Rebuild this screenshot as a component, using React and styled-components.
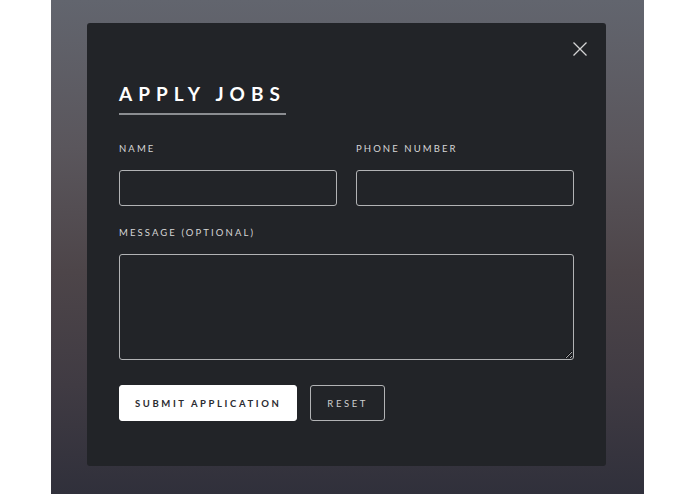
import styled, { createGlobalStyle } from "styled-components";

const GlobalStyle = createGlobalStyle`
  html, body {
    margin: 0;
    padding: 0;
    background: #fff;
  }
  body {
    font-family: Lato, "Liberation Sans", sans-serif;
  }
  * {
    box-sizing: border-box;
  }
`;

const Page = styled.div`
  width: 593px;
  height: 494px;
  margin: 0 0 0 51px;
  padding: 23px 0 0 36px;
  display: flex;
  align-items: flex-start;
  background: linear-gradient(
    180deg,
    #62656e 0%,
    #5a565c 30%,
    #4d4549 55%,
    #403b43 78%,
    #30303b 100%
  );
`;

const Modal = styled.div`
  position: relative;
  width: 519px;
  height: 443px;
  padding: 59px 32px 45px;
  background: #222428;
  border-radius: 3px;
  color: #fff;
`;

const CloseButton = styled.button`
  position: absolute;
  top: 19px;
  right: 19px;
  width: 14px;
  height: 14px;
  padding: 0;
  border: 0;
  background: none;
  cursor: pointer;
  display: block;
`;

const Title = styled.h2`
  display: inline-block;
  margin: 0;
  padding-bottom: 7px;
  font-size: 19px;
  line-height: 24px;
  font-weight: 700;
  letter-spacing: 6px;
  color: #fff;
  border-bottom: 2px solid #8b8d91;
`;

const Form = styled.form`
  display: flex;
  flex-direction: column;
  gap: 21px;
  margin-top: 28px;
`;

const Row = styled.div`
  display: grid;
  grid-template-columns: 1fr 1fr;
  gap: 19px;
`;

const Field = styled.label`
  display: flex;
  flex-direction: column;
`;

const Label = styled.span`
  display: block;
  font-size: 9.5px;
  line-height: 12px;
  letter-spacing: 2.1px;
  color: #d6d6d6;
  margin-bottom: 15px;
`;

const Input = styled.input`
  height: 36px;
  width: 100%;
  background: transparent;
  border: 1px solid #b2b3b5;
  border-radius: 3px;
  color: #fff;
  padding: 0 10px;
  font: inherit;
  outline: none;
`;

const TextArea = styled.textarea`
  height: 106px;
  width: 100%;
  background: transparent;
  border: 1px solid #b2b3b5;
  border-radius: 3px;
  color: #fff;
  padding: 10px;
  font: inherit;
  outline: none;
  resize: vertical;
  display: block;
`;

const Actions = styled.div`
  display: flex;
  gap: 13px;
  margin-top: 4px;
`;

const Button = styled.button`
  height: 36px;
  padding: 0 ${(p) => (p.$primary ? "15px" : "16px")};
  border-radius: 3px;
  font-family: Lato, "Liberation Sans", sans-serif;
  font-size: 9.5px;
  letter-spacing: 2.6px;
  font-weight: ${(p) => (p.$primary ? 700 : 400)};
  background: ${(p) => (p.$primary ? "#fff" : "transparent")};
  color: ${(p) => (p.$primary ? "#2a2b30" : "#cfcfcf")};
  border: 1px solid ${(p) => (p.$primary ? "#fff" : "#b2b3b5")};
  cursor: pointer;
`;

function CloseIcon() {
  return (
    <svg width="14" height="14" viewBox="0 0 14 14" fill="none">
      <path d="M0.5 0.5L13.5 13.5M13.5 0.5L0.5 13.5" stroke="#d4d4d4" strokeWidth="1.3" />
    </svg>
  );
}

export default function App() {
  return (
    <>
      <GlobalStyle />
      <Page>
        <Modal>
          <CloseButton aria-label="Close">
            <CloseIcon />
          </CloseButton>
          <Title>APPLY JOBS</Title>
          <Form onSubmit={(e) => e.preventDefault()}>
            <Row>
              <Field>
                <Label>NAME</Label>
                <Input type="text" />
              </Field>
              <Field>
                <Label>PHONE NUMBER</Label>
                <Input type="tel" />
              </Field>
            </Row>
            <Field>
              <Label>MESSAGE (OPTIONAL)</Label>
              <TextArea />
            </Field>
            <Actions>
              <Button $primary type="submit">SUBMIT APPLICATION</Button>
              <Button type="reset">RESET</Button>
            </Actions>
          </Form>
        </Modal>
      </Page>
    </>
  );
}
